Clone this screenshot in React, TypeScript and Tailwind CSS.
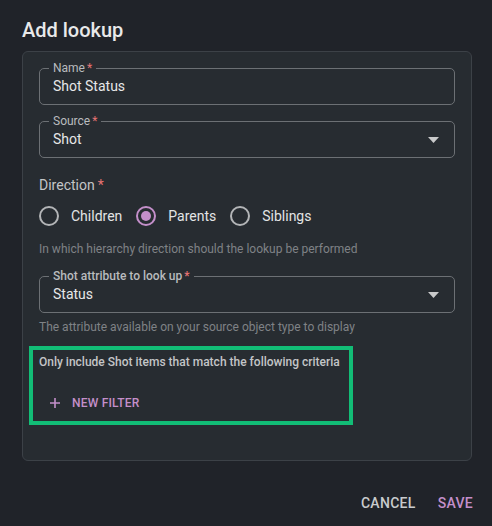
import React from "react";

function Field({ label, value, select, bold }: { label: string; value: string; select?: boolean; bold?: boolean }) {
  return (
    <div className="relative h-[37px] w-full rounded-[5px] border border-[#6c7074] flex items-center pl-[13px] pr-[14px]">
      <span
        className={
          "absolute -top-[8px] left-[9px] px-[4px] bg-[#272c31] text-[12px] leading-[14px] text-[#b9bbbe] " +
          (bold ? "font-medium" : "")
        }
      >
        {label}
        <span className="text-[#e57373] ml-[2px]">*</span>
      </span>
      <span className="flex-1 text-[14px] text-[#e6e7e8]">{value}</span>
      {select && (
        <svg width="11" height="6" viewBox="0 0 11 6" className="mr-[1px]">
          <path d="M0 0 L11 0 L5.5 6 Z" fill="#c9cacb" />
        </svg>
      )}
    </div>
  );
}

function Radio({ label, checked }: { label: string; checked?: boolean }) {
  return (
    <div className="flex items-center gap-[12px]">
      <div
        className={
          "w-[20px] h-[20px] rounded-full border-2 flex items-center justify-center " +
          (checked ? "border-[#c48fca]" : "border-[#b3b5b7]")
        }
      >
        {checked && <div className="w-[10px] h-[10px] rounded-full bg-[#c48fca]" />}
      </div>
      <span className="text-[14px] text-[#e3e4e5]">{label}</span>
    </div>
  );
}

export default function App() {
  return (
    <div
      className="w-[492px] h-[526px] bg-[#202329] flex flex-col"
      style={{ fontFamily: "Roboto, 'Noto Sans', sans-serif" }}
    >
      <div className="pl-[22px] pt-[18px] h-[42px] text-[20px] leading-[24px] font-medium text-[#e8e9ea]">
        Add lookup
      </div>
      <div className="mt-[9px] ml-[22px] w-[450px] h-[410px] rounded-[6px] border border-[#3c4147] bg-[#272c31] px-[16px] pt-[16px] flex flex-col">
        <Field label="Name" value="Shot Status" />
        <div className="mt-[16px]">
          <Field label="Source" value="Shot" select />
        </div>
        <div className="mt-[17px] h-[20px] leading-[20px] text-[14px] text-[#c3c5c7]">
          Direction<span className="text-[#e57373] ml-[3px]">*</span>
        </div>
        <div className="mt-[1px] h-[40px] flex items-center gap-[14px]">
          <Radio label="Children" />
          <Radio label="Parents" checked />
          <Radio label="Siblings" />
        </div>
        <div className="mt-[5px] text-[12px] leading-[16px] text-[#7f8286]">
          In which hierarchy direction should the lookup be performed
        </div>
        <div className="mt-[19px]">
          <Field label="Shot attribute to look up" value="Status" select bold />
        </div>
        <div className="mt-[6px] text-[12px] leading-[16px] text-[#7f8286]">
          The attribute available on your source object type to display
        </div>
        <div className="mt-[11px] -ml-[10px] w-[324px] h-[79px] border-[4px] border-[#12bd76] pl-[6px] pt-[4px] flex flex-col">
          <div className="text-[12px] leading-[16px] font-medium text-[#c3c5c7]">
            Only include Shot items that match the following criteria
          </div>
          <div className="mt-[24px] ml-[11px] flex items-center gap-[12px] text-[#c48fca]">
            <svg width="10" height="10" viewBox="0 0 10 10">
              <path d="M5 0 V10 M0 5 H10" stroke="#c48fca" strokeWidth="1.6" />
            </svg>
            <span className="text-[12px] leading-[18px] font-medium tracking-[0.2px]">NEW FILTER</span>
          </div>
        </div>
      </div>
      <div className="mt-[32px] flex justify-end gap-[22px] pr-[19px] text-[14px] leading-[20px] font-medium tracking-[0.3px]">
        <span className="text-[#c9cbcd]">CANCEL</span>
        <span className="text-[#c48fca]">SAVE</span>
      </div>
    </div>
  );
}
